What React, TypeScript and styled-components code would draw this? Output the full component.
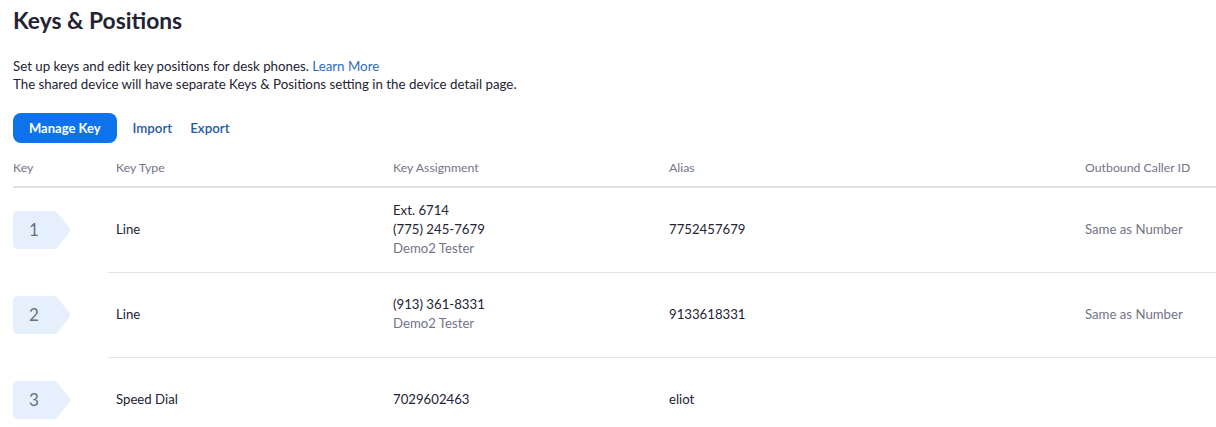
import React from "react";
import styled, { createGlobalStyle } from "styled-components";

const GlobalStyle = createGlobalStyle`
  html, body { margin: 0; padding: 0; background: #ffffff; }
  body { font-family: Lato, "Open Sans", Arial, sans-serif; color: #232333; -webkit-font-smoothing: antialiased; }
  * { box-sizing: border-box; }
`;

const Page = styled.div`
  padding: 6px 0 0 13px;
`;

const Title = styled.h1`
  margin: 0;
  font-size: 22.8px;
  line-height: 28px;
  font-weight: 700;
  color: #232333;
`;

const Description = styled.div`
  margin-top: 23px;
  font-size: 13.3px;
  line-height: 18px;
  color: #232333;
`;

const Link = styled.a<{ $strong?: boolean }>`
  color: ${(p) => (p.$strong ? "#1f5aa6" : "#2d6cc0")};
  font-weight: ${(p) => (p.$strong ? 600 : 400)};
  text-decoration: none;
  cursor: pointer;
`;

const Toolbar = styled.div`
  display: flex;
  align-items: center;
  gap: 16px;
  margin-top: 20px;
`;

const PrimaryButton = styled.button`
  height: 30px;
  padding: 0 16px;
  border: none;
  border-radius: 8px;
  background: #0e72ed;
  color: #ffffff;
  font-family: inherit;
  font-size: 13px;
  font-weight: 700;
  cursor: pointer;
`;

const ToolLinks = styled.div`
  display: flex;
  gap: 18px;
  font-size: 13.3px;
`;

const Table = styled.div`
  display: grid;
  grid-template-columns: 95px 285px 276px 416px 1fr;
`;

const HeadCell = styled.div<{ $pad?: number }>`
  height: 45px;
  display: flex;
  align-items: center;
  padding-left: ${(p) => p.$pad ?? 0}px;
  padding-top: 6px;
  font-size: 12.3px;
  color: #747487;
  border-bottom: 2px solid #dfe3e8;
`;

const Cell = styled.div<{ $key?: boolean; $pad?: number; $last?: boolean }>`
  min-height: 85px;
  display: flex;
  flex-direction: column;
  justify-content: center;
  padding-left: ${(p) => p.$pad ?? 0}px;
  padding-bottom: 2px;
  font-size: 13.2px;
  line-height: 19px;
  color: #232333;
  border-bottom: ${(p) => (p.$key || p.$last ? "none" : "1px solid #e3e5e8")};
`;

const Muted = styled.span`
  color: #747487;
`;

const BadgeWrap = styled.div`
  position: relative;
  width: 58px;
  height: 38px;
`;

const BadgeNum = styled.span`
  position: absolute;
  left: 0;
  top: 0;
  width: 42px;
  height: 38px;
  display: flex;
  align-items: center;
  justify-content: center;
  font-size: 17px;
  color: #64707f;
`;

const Badge: React.FC<{ n: number }> = ({ n }) => (
  <BadgeWrap>
    <svg width="58" height="38" viewBox="0 0 58 38">
      <path
        d="M5 0 H41 Q43 0 44.3 1.5 L56.7 17 Q58 19 56.7 21 L44.3 36.5 Q43 38 41 38 H5 Q0 38 0 33 V5 Q0 0 5 0 Z"
        fill="#e6f0fc"
      />
    </svg>
    <BadgeNum>{n}</BadgeNum>
  </BadgeWrap>
);

type Row = {
  key: number;
  type: string;
  assignment: { text: string; muted?: boolean }[];
  alias: string;
  caller: string;
};

const rows: Row[] = [
  {
    key: 1,
    type: "Line",
    assignment: [{ text: "Ext. 6714" }, { text: "(775) 245-7679" }, { text: "Demo2 Tester", muted: true }],
    alias: "7752457679",
    caller: "Same as Number",
  },
  {
    key: 2,
    type: "Line",
    assignment: [{ text: "(913) 361-8331" }, { text: "Demo2 Tester", muted: true }],
    alias: "9133618331",
    caller: "Same as Number",
  },
  {
    key: 3,
    type: "Speed Dial",
    assignment: [{ text: "7029602463" }],
    alias: "eliot",
    caller: "",
  },
];

export default function App() {
  return (
    <>
      <GlobalStyle />
      <Page>
        <Title>Keys &amp; Positions</Title>
        <Description>
          <div>
            Set up keys and edit key positions for desk phones. <Link>Learn More</Link>
          </div>
          <div>The shared device will have separate Keys &amp; Positions setting in the device detail page.</div>
        </Description>
        <Toolbar>
          <PrimaryButton>Manage Key</PrimaryButton>
          <ToolLinks>
            <Link $strong>Import</Link>
            <Link $strong>Export</Link>
          </ToolLinks>
        </Toolbar>
        <Table>
          <HeadCell>Key</HeadCell>
          <HeadCell $pad={8}>Key Type</HeadCell>
          <HeadCell>Key Assignment</HeadCell>
          <HeadCell>Alias</HeadCell>
          <HeadCell>Outbound Caller ID</HeadCell>
          {rows.map((r, i) => {
            const last = i === rows.length - 1;
            return (
              <React.Fragment key={r.key}>
                <Cell $key>
                  <Badge n={r.key} />
                </Cell>
                <Cell $pad={8} $last={last}>{r.type}</Cell>
                <Cell $last={last}>
                  {r.assignment.map((a, j) =>
                    a.muted ? <Muted key={j}>{a.text}</Muted> : <span key={j}>{a.text}</span>
                  )}
                </Cell>
                <Cell $last={last}>{r.alias}</Cell>
                <Cell $last={last}>
                  <Muted>{r.caller}</Muted>
                </Cell>
              </React.Fragment>
            );
          })}
        </Table>
      </Page>
    </>
  );
}
